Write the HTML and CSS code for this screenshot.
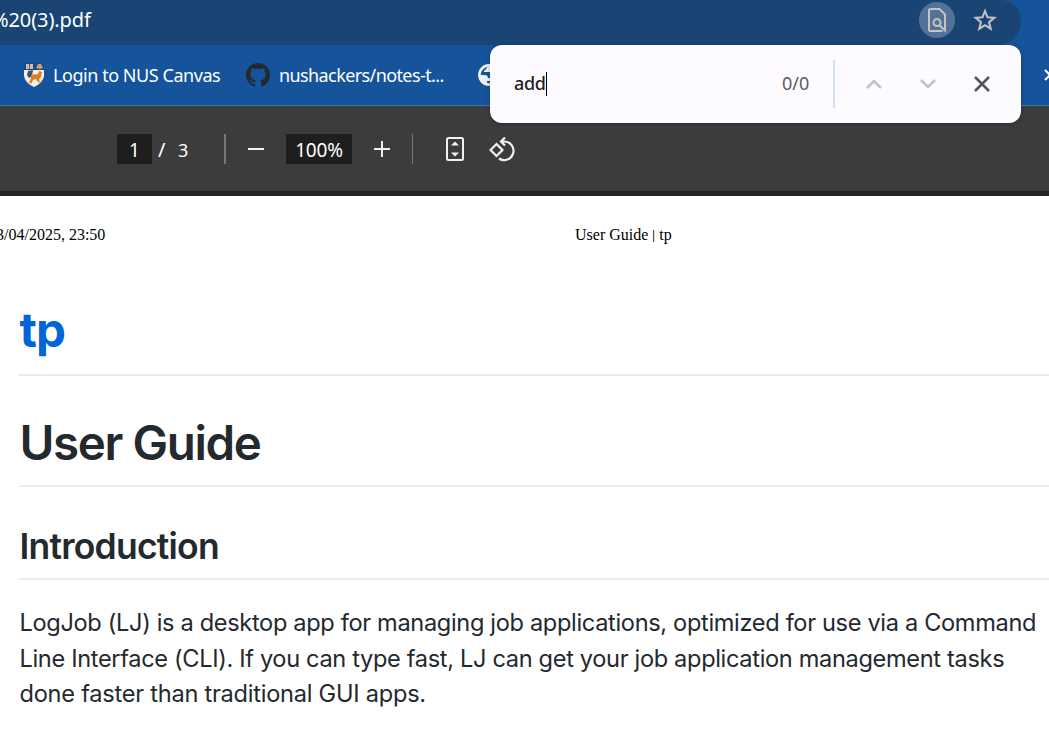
FILE: index.html
```
<!DOCTYPE html>
<html lang="en">
<head>
<meta charset="utf-8">
<title>User Guide | tp</title>
<link rel="stylesheet" href="styles.css">
</head>
<body>
<header class="address-row">
  <div class="omnibox">
    <span class="url">%20(3).pdf</span>
    <span class="find-badge"><svg width="20" height="26" viewBox="0 0 20 26" fill="none" stroke="#c5c4c2" stroke-width="2"><path d="M15.500 24H3.500Q2 24 2 22.500V3.500Q2 2 3.500 2H12.500L18 7.500V23.500L12.500 18.500"/><circle cx="10" cy="15.500" r="3.500"/></svg></span>
    <svg class="star" width="24" height="24" viewBox="0 0 24 24" fill="none" stroke="#c5c4c2" stroke-width="2"><path d="M12 3L14.500 9.300L21.300 9.800L16 14.100L17.700 20.700L12 17.100L6.300 20.700L8 14.100L2.700 9.800L9.500 9.300Z"/></svg>
  </div>
</header>
<nav class="bookmarks">
  <svg class="crest" width="20" height="24" viewBox="0 0 20 24"><path d="M0 0H20V13Q19 20 10 24Q1 20 0 13Z" fill="#f3eee8"/><path d="M0 0H20V7H0Z" fill="#1b4a7e"/><path d="M2 1H9V6H2Z" fill="#d0bca7"/><path d="M5.500 1V6" stroke="#5b6675"/><path d="M12 5L14 1H17L19 5L16 6Z" fill="#cf9d72"/><path d="M4 8L9 7L8 13L5 15L3 12Z" fill="#3c5570"/><path d="M7 12L14 11L15 8L18 9L17 14L15 16L16 20L13 18L12 16L9 17L7 21L5 19L7 16Z" fill="#e27b1e"/></svg>
  <span class="bookmark canvas">Login to NUS Canvas</span>
  <svg class="github" width="24" height="24" viewBox="0 0 16 16"><path fill="#24292f" d="M8 0C3.580 0 0 3.580 0 8c0 3.540 2.290 6.530 5.470 7.590.4.070.55-.17.55-.38v-1.490c-2.010.37-2.530-.49-2.690-.94-.09-.23-.48-.94-.82-1.130-.28-.15-.68-.52-.01-.53.63-.01 1.080.58 1.230.82.72 1.210 1.870.87 2.330.66.070-.52.28-.87.51-1.070-1.780-.2-3.640-.89-3.640-3.950 0-.87.31-1.590.82-2.150-.08-.2-.36-1.020.08-2.120 0 0 .67-.21 2.200.82a7.500 7.500 0 0 1 4 0c1.530-1.040 2.200-.82 2.200-.82.44 1.100.16 1.920.08 2.120.51.56.82 1.270.82 2.150 0 3.070-1.870 3.750-3.650 3.950.29.25.54.73.54 1.480v2.200c0 .21.15.46.55.38A8 8 0 0 0 16 8c0-4.420-3.580-8-8-8Z"/></svg>
  <span class="bookmark notes">nushackers/notes-t...</span>
  <svg class="globe" width="22" height="22" viewBox="0 0 22 22"><circle cx="11" cy="11" r="9.600" fill="#15539a" stroke="#f0f0f2" stroke-width="2.600"/><path d="M1 11H6.500Q10 11 10 14H13V17H9V21Q1 20 1 11ZM6 8V6.500Q8 6.500 8.500 4L12 1L20 5V10H12V8Z" fill="#f0f0f2"/></svg>
  <svg class="overflow" width="12" height="14" viewBox="0 0 12 14" fill="none" stroke="#fff" stroke-width="2"><path d="M1 2L6 7L1 12M6 2L11 7L6 12"/></svg>
</nav>
<div class="pdf-toolbar">
  <span class="field page-field">1</span><span class="slash">/</span><span class="total">3</span>
  <i class="divider first"></i>
  <svg class="minus" width="16" height="16" viewBox="0 0 16 16"><path d="M0 8H16" stroke="#f1f1f1" stroke-width="2"/></svg>
  <span class="field zoom-field">100%</span>
  <svg class="plus" width="16" height="16" viewBox="0 0 16 16"><path d="M0 8H16M8 0V16" stroke="#f1f1f1" stroke-width="2"/></svg>
  <i class="divider second"></i>
  <svg class="fit" width="18" height="24" viewBox="0 0 18 24"><rect x="1" y="1" width="16" height="22" rx="1.500" fill="none" stroke="#f1f1f1" stroke-width="2"/><path d="M5 8.500H13L9 4.500ZM5 15.500H13L9 19.500Z" fill="#f1f1f1"/></svg>
  <svg class="rotate" width="26" height="26" viewBox="0 0 26 26" fill="none" stroke="#f1f1f1" stroke-width="2.200"><path d="M7.500 8L13.500 14L7.500 20L1.500 14ZM16 1.500L12 5.500L16 9.500M12 5.500H15A9.300 9.300 0 1 1 10 22.500"/></svg>
</div>
<main class="page">
  <div class="print-header"><span class="date">3/04/2025, 23:50</span><span class="doc-title">User Guide <span class="bar">|</span> tp</span></div>
  <article class="content">
    <h1 class="site-title"><a>tp</a></h1>
    <h1 class="guide-title"><span>User Guide</span></h1>
    <h2 class="intro-title"><span>Introduction</span></h2>
    <p class="copy"><span class="l1">LogJob (LJ) is a desktop app for managing job applications, optimized for use via a Command</span><br><span class="l2">Line Interface (CLI). If you can type fast, LJ can get your job application management tasks</span><br><span class="l3">done faster than traditional GUI apps.</span></p>
  </article>
</main>
<div class="findbar">
  <span class="query">add</span><i class="caret"></i>
  <span class="count">0/0</span>
  <i class="find-divider"></i>
  <svg class="up" width="16" height="10" viewBox="0 0 16 10" fill="none" stroke="#c4c2c8" stroke-width="2.600"><path d="M1 9L8 2L15 9"/></svg>
  <svg class="down" width="16" height="10" viewBox="0 0 16 10" fill="none" stroke="#c4c2c8" stroke-width="2.600"><path d="M1 1L8 8L15 1"/></svg>
  <svg class="close" width="16" height="16" viewBox="0 0 16 16" stroke="#55565a" stroke-width="2.600"><path d="M1 1L15 15M15 1L1 15"/></svg>
</div>
</body>
</html>
```
FILE: styles.css
```
* { box-sizing: border-box; }
body { margin: 0; width: 1049px; height: 737px; overflow: hidden; position: relative; background: #fff; font-family: "Noto Sans", sans-serif; }
svg, i { display: block; flex: none; }
span { white-space: nowrap; }
.address-row { height: 45px; background: #15539a; overflow: hidden; }
.omnibox { width: 1021px; height: 45px; background: #1a4473; border-radius: 0 20px 24px 0; display: flex; align-items: center; padding-bottom: 5px; }
.url { width: 919px; color: #fff; font-size: 20px; letter-spacing: -0.1px; margin-left: -8px; padding-bottom: 2px; }
.find-badge { width: 36px; height: 36px; margin-left: 8px; border-radius: 50%; background: #527298; display: flex; align-items: center; justify-content: center; flex: none; }
.star { margin-left: 18px; }
.bookmarks { height: 61px; background: #15539a; border-bottom: 1px solid #4178b3; display: flex; align-items: center; color: #fff; font-size: 18px; }
.crest { margin-left: 24px; }
.bookmark { line-height: 24px; flex: none; padding-bottom: 1px; }
.canvas { width: 202px; padding-left: 9px; letter-spacing: -0.45px; }
.notes { width: 208px; padding-left: 9px; letter-spacing: -0.6px; }
.overflow { margin-left: 544px; }
.pdf-toolbar { height: 90px; background: #3c3c3c; border-bottom: 5px solid #242424; display: flex; align-items: center; color: #fff; font-size: 18px; padding: 1px 0 0 117px; }
.field { background: #1e1e1e; height: 30px; line-height: 32px; text-align: center; }
.page-field { width: 35px; font-size: 19px; }
.slash { width: 26px; padding-left: 6px; font-size: 20px; }
.total { width: 46px; padding-top: 1px; }
.divider { width: 2px; height: 30px; background: #777; }
.minus { margin-left: 22px; }
.zoom-field { width: 66px; margin-left: 22px; font-size: 19px; letter-spacing: -0.2px; }
.plus { margin-left: 22px; }
.second { width: 1px; margin-left: 22px; }
.fit { margin-left: 33px; }
.rotate { margin-left: 25px; }
.page { height: 541px; padding-top: 29px; }
.print-header { height: 20px; display: flex; font: 16px/20px "Liberation Serif", serif; color: #000; }
.date { width: 579px; margin-left: -4px; }
.bar { display: inline-block; width: 3px; font-size: 12px; line-height: 12px; font-weight: 700; vertical-align: 1px; }
.content { padding-left: 19px; color: #24292e; font-family: Inter, sans-serif; }
h1, h2, p { margin: 0; }
h1 { font-size: 47.500px; line-height: 60px; font-weight: 600; border-bottom: 2px solid #eaecef; }
.site-title { height: 131px; padding-top: 55px; color: #0366d6; letter-spacing: -0.8px; font-weight: 650; }
.site-title a { padding-left: 0.5px; }
.guide-title { height: 111px; padding-top: 37px; letter-spacing: -1.38px; }
.intro-title { height: 93px; padding-top: 37px; font-size: 35.500px; line-height: 46px; font-weight: 600; border-bottom: 2px solid #eaecef; letter-spacing: -0.78px; }
.guide-title span, .intro-title span { padding-left: 0.5px; }
.copy { padding: 25px 0 0 0.5px; font-size: 23.600px; line-height: 35.700px; letter-spacing: -0.34px; }
.l3 { letter-spacing: -0.25px; }
.findbar { position: absolute; left: 490px; top: 45px; width: 531px; height: 78px; border-radius: 12px; background: #fdfbff; display: flex; align-items: center; box-shadow: 0 1px 4px #0004; padding-left: 24px; color: #1f1f1f; font-size: 18px; }
.query { width: 32px; font-weight: 500; letter-spacing: -0.4px; padding-bottom: 2px; }
.caret { width: 1px; height: 24px; background: #000; }
.count { width: 51px; margin-left: 235px; color: #5b5c62; padding-bottom: 2px; }
.find-divider { width: 2px; height: 48px; background: #d3dff5; }
.up { margin-left: 31px; }
.down { margin-left: 38px; }
.close { margin-left: 38px; }
```
